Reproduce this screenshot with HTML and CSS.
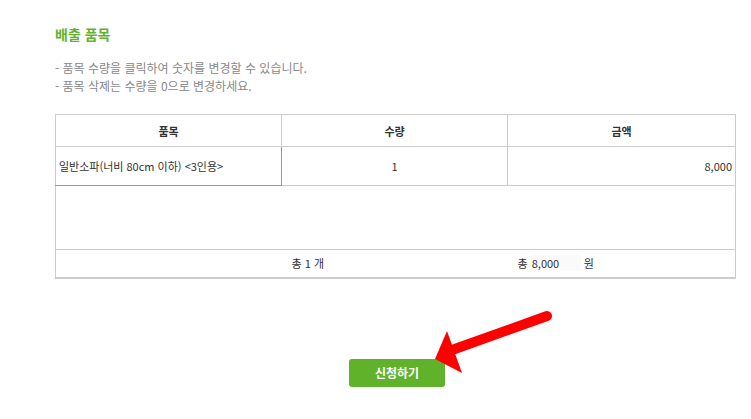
FILE: index.html
```html
<!DOCTYPE html>
<html lang="ko">
<head>
<meta charset="utf-8">
<link rel="stylesheet" href="styles.css">
</head>
<body>
<div class="page">
  <h2 class="title">배출 품목</h2>
  <ul class="notes">
    <li>- 품목 수량을 클릭하여 숫자를 변경할 수 있습니다.</li>
    <li>- 품목 삭제는 수량을 0으로 변경하세요.</li>
  </ul>
  <table class="items">
    <colgroup><col class="c1"><col class="c2"><col class="c3"></colgroup>
    <thead>
      <tr><th>품목</th><th>수량</th><th>금액</th></tr>
    </thead>
    <tbody>
      <tr class="row">
        <td class="name">일반소파(너비 80cm 이하) &lt;3인용&gt;</td>
        <td class="qty">1</td>
        <td class="price">8,000</td>
      </tr>
      <tr class="empty"><td colspan="3"></td></tr>
      <tr class="total">
        <td></td>
        <td class="sum">총 1 개</td>
        <td class="sum">총 <span class="amount">8,000</span> 원</td>
      </tr>
    </tbody>
  </table>
  <div class="actions">
    <button class="apply">신청하기</button>
  </div>
  <svg class="arrow" width="751" height="419" viewBox="0 0 751 419">
    <line x1="547" y1="316" x2="452" y2="350" stroke="#f00" stroke-width="10" stroke-linecap="round"/>
    <polygon points="435,359 447,331 462,373" fill="#f00"/>
  </svg>
</div>
</body>
</html>
```
FILE: styles.css
```css
* { box-sizing: border-box; }
html, body { margin: 0; padding: 0; background: #fff; }
body {
  font-family: "Noto Sans CJK KR", "Noto Sans", "Liberation Sans", sans-serif;
  color: #333;
}
.page {
  position: relative;
  width: 751px;
  height: 419px;
  padding: 25px 0 0 55px;
}
.title {
  margin: 0;
  font-size: 14px;
  line-height: 18px;
  font-weight: bold;
  color: #62b22f;
}
.notes {
  list-style: none;
  margin: 16px 0 0 0;
  padding: 0;
  font-size: 12px;
  line-height: 18px;
  color: #888;
}
.items {
  margin-top: 19px;
  width: 680px;
  border-collapse: collapse;
  table-layout: fixed;
  font-size: 11px;
  color: #333;
  border-top: 1px solid #ccc;
  border-left: 1px solid #ccc;
  border-right: 1px solid #ccc;
  border-bottom: 2px solid #ccc;
}
.c1 { width: 226px; }
.c2 { width: 226px; }
.c3 { width: 228px; }
.items th {
  height: 32px;
  padding: 0;
  font-weight: bold;
  text-align: center;
  border: 1px solid #ccc;
  border-top: none;
}
.items th:first-child { border-left: none; }
.items th:last-child { border-right: none; }
.row td {
  height: 39px;
  border-right: 1px solid #ccc;
  border-bottom: 1px solid #ccc;
  padding: 0 4px;
}
.row td.name {
  border: 1px solid #999;
  border-left: none;
  padding-left: 3px;
}
.row td.qty { text-align: center; }
.row td.price { text-align: right; border-right: none; padding-right: 3px; }
.empty td {
  height: 64px;
  padding: 0;
  border-bottom: 1px solid #ccc;
}
.total td { height: 28px; padding: 0; }
.total td.sum { text-align: left; padding-left: 10px; }
.amount {
  display: inline-block;
  width: 50px;
  background: #fafafa;
  padding-left: 1px;
}
.actions {
  display: flex;
  justify-content: center;
  margin-top: 80px;
  width: 684px;
}
.apply {
  width: 96px;
  height: 28px;
  border: none;
  border-radius: 3px;
  background: #5fb229;
  color: #fff;
  font-family: inherit;
  font-size: 12px;
  font-weight: bold;
  cursor: pointer;
}
.arrow {
  position: absolute;
  left: 0;
  top: 0;
  pointer-events: none;
}
```
